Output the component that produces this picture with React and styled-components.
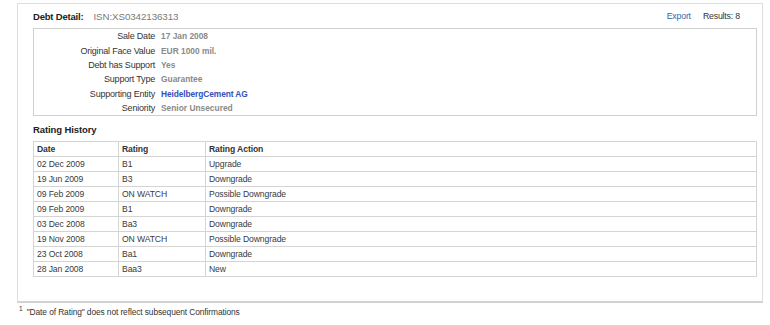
import React from 'react'
import styled, { createGlobalStyle } from 'styled-components'

const GlobalStyle = createGlobalStyle`
  body {
    margin: 0;
    background: #ffffff;
    font-family: "Liberation Sans", Arial, Helvetica, sans-serif;
  }
`

const details = [
  { label: 'Sale Date', value: '17 Jan 2008' },
  { label: 'Original Face Value', value: 'EUR 1000 mil.' },
  { label: 'Debt has Support', value: 'Yes' },
  { label: 'Support Type', value: 'Guarantee' },
  { label: 'Supporting Entity', value: 'HeidelbergCement AG', link: true },
  { label: 'Seniority', value: 'Senior Unsecured' },
]

const ratings = [
  ['02 Dec 2009', 'B1', 'Upgrade'],
  ['19 Jun 2009', 'B3', 'Downgrade'],
  ['09 Feb 2009', 'ON WATCH', 'Possible Downgrade'],
  ['09 Feb 2009', 'B1', 'Downgrade'],
  ['03 Dec 2008', 'Ba3', 'Downgrade'],
  ['19 Nov 2008', 'ON WATCH', 'Possible Downgrade'],
  ['23 Oct 2008', 'Ba1', 'Downgrade'],
  ['28 Jan 2008', 'Baa3', 'New'],
]

const App = () => {
  return (
    <>
      <GlobalStyle />
      <Page>
        <Panel>
          <Header>
            <TitleGroup>
              <Title>Debt Detail:</Title>
              <Isin>ISN:XS0342136313</Isin>
            </TitleGroup>
            <Actions>
              <ExportLink>Export</ExportLink>
              <Results>Results: 8</Results>
            </Actions>
          </Header>
          <DetailBox>
            {details.map((d) => (
              <DetailRow key={d.label}>
                <Label>{d.label}</Label>
                <Value $link={d.link}>{d.value}</Value>
              </DetailRow>
            ))}
          </DetailBox>
          <SectionTitle>Rating History</SectionTitle>
          <Table>
            <colgroup>
              <col style={{ width: '85px' }} />
              <col style={{ width: '87px' }} />
              <col />
            </colgroup>
            <thead>
              <tr>
                <Th>Date</Th>
                <Th>Rating</Th>
                <Th>Rating Action</Th>
              </tr>
            </thead>
            <tbody>
              {ratings.map((r, i) => (
                <tr key={i}>
                  <Td>{r[0]}</Td>
                  <Td>{r[1]}</Td>
                  <Td>{r[2]}</Td>
                </tr>
              ))}
            </tbody>
          </Table>
        </Panel>
        <Footnote>
          <sup>1</sup> "Date of Rating" does not reflect subsequent Confirmations
        </Footnote>
      </Page>
    </>
  )
}

export default App

const Page = styled.div`
  width: 770px;
  height: 325px;
  padding: 3px 7px 0 17px;
  box-sizing: border-box;
`

const Panel = styled.div`
  border: 1px solid #dedede;
  border-bottom: 2px solid #d2d2d2;
  padding: 0 5px 24px 15px;
`

const Header = styled.div`
  height: 24px;
  display: flex;
  align-items: center;
  justify-content: space-between;
  padding-right: 17px;
`

const TitleGroup = styled.div`
  display: flex;
  align-items: baseline;
  gap: 10px;
`

const Title = styled.span`
  font-size: 9.5px;
  font-weight: bold;
  color: #222;
  letter-spacing: -0.2px;
`

const Isin = styled.span`
  font-size: 9.8px;
  color: #7a7a7a;
  letter-spacing: -0.1px;
`

const Actions = styled.div`
  display: flex;
  align-items: baseline;
  gap: 12px;
  font-size: 8.8px;
  letter-spacing: -0.2px;
`

const ExportLink = styled.span`
  color: #3a66a8;
`

const Results = styled.span`
  color: #333;
`

const DetailBox = styled.div`
  border: 1px solid #d0d0d0;
  padding: 0;
`

const DetailRow = styled.div`
  display: grid;
  grid-template-columns: 121px 1fr;
  column-gap: 6px;
  height: 14.4px;
  align-items: center;
  font-size: 9px;
  letter-spacing: -0.2px;
`

const Label = styled.span`
  text-align: right;
  color: #333;
`

const Value = styled.span`
  font-weight: bold;
  font-size: 8.4px;
  color: ${(p) => (p.$link ? '#3450b8' : '#8a8a8a')};
  letter-spacing: ${(p) => (p.$link ? '-0.1px' : '0px')};
`

const SectionTitle = styled.div`
  margin: 8px 0 5px;
  height: 12px;
  line-height: 12px;
  font-size: 9.5px;
  font-weight: bold;
  color: #222;
  letter-spacing: -0.1px;
`

const Table = styled.table`
  width: 100%;
  border-collapse: collapse;
  table-layout: fixed;
  border: 1px solid #cfcfcf;
`

const Th = styled.th`
  height: 14px;
  padding: 0 3px;
  text-align: left;
  font-size: 8.6px;
  font-weight: bold;
  color: #333;
  border: 1px solid #d4d4d4;
  letter-spacing: -0.1px;
`

const Td = styled.td`
  height: 14px;
  padding: 0 3px;
  font-size: 8.6px;
  color: #3a3a3a;
  border: 1px solid #d4d4d4;
  letter-spacing: -0.1px;
  white-space: nowrap;
`

const Footnote = styled.div`
  margin-top: 2px;
  padding-left: 2px;
  font-size: 8.4px;
  color: #333;
  letter-spacing: -0.1px;

  sup {
    font-size: 6.5px;
    margin-right: 2px;
  }
`
